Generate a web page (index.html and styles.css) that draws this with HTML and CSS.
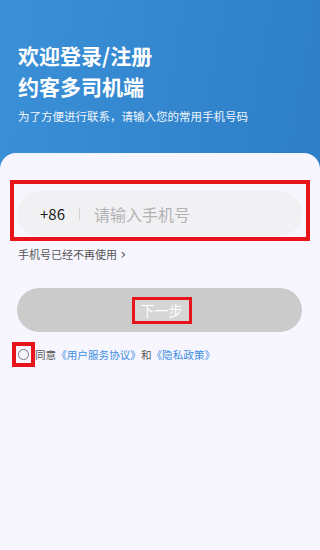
FILE: index.html
```html
<!DOCTYPE html>
<html lang="zh-CN">

<head>
  <meta charset="UTF-8">
  <title>登录</title>
  <link rel="stylesheet" href="styles.css">
</head>

<body>
  <div class="page">
    <div class="header">
      <h1 class="title">欢迎登录/注册<br>约客多司机端</h1>
      <p class="subtitle">为了方便进行联系，请输入您的常用手机号码</p>
    </div>

    <div class="card">
      <div class="phone-box">
        <div class="phone">
          <span class="code">+86</span>
          <span class="divider"></span>
          <input type="tel" class="phone-input" placeholder="请输入手机号">
        </div>
      </div>

      <a href="#" class="old-phone">手机号已经不再使用 <span class="arrow">&rsaquo;</span></a>

      <button class="next"><span class="next-text">下一步</span></button>

      <div class="agree">
        <span class="check-box"><span class="circle"></span></span>
        <span class="agree-text">同意<a href="#" class="link">《用户服务协议》</a>和<a href="#" class="link">《隐私政策》</a></span>
      </div>
    </div>
  </div>
</body>

</html>
```

FILE: styles.css
```css
html,
body {
  height: 100%;
}

body {
  margin: 0;
  font-family: "Noto Sans CJK SC", "Noto Sans", sans-serif;
  background: #f7f6fe;
}

.page {
  height: 100%;
  display: flex;
  flex-direction: column;
  background: linear-gradient(100deg, #3b90d7, #2a7bc4);
}

.header {
  height: 153px;
  padding: 40px 0 0 18px;
  box-sizing: border-box;
  color: #FFF;
}

.title {
  margin: 0;
  font-size: 21px;
  line-height: 31px;
  font-weight: bold;
}

.subtitle {
  margin: 6px 0 0;
  font-size: 11.5px;
  line-height: 16px;
  color: #eef5fc;
}

.card {
  flex: 1;
  background: #f7f6fe;
  border-radius: 16px 16px 0 0;
  padding-top: 27px;
}

.phone-box {
  margin: 0 10px;
  padding: 7px 4px 1px 3px;
  border: 4px solid #e8141c;
}

.phone {
  height: 45px;
  display: flex;
  align-items: center;
  background: #f1f1f3;
  border-radius: 23px;
  padding-left: 23px;
}

.code {
  font-size: 15px;
  color: #222;
}

.divider {
  width: 1px;
  height: 12px;
  background: #d2d2d2;
  margin: 0 14px;
}

.phone-input {
  flex: 1;
  min-width: 0;
  border: none;
  background: none;
  outline: none;
  padding: 0;
  font-family: inherit;
  font-size: 16px;
}

.phone-input::placeholder {
  color: #b3b3b5;
}

.old-phone {
  display: block;
  margin: 5px 0 0 18px;
  font-size: 11px;
  line-height: 16px;
  color: #555;
  text-decoration: none;
}

.arrow {
  margin-left: 1px;
  font-family: "DejaVu Sans", sans-serif;
  font-size: 14px;
  line-height: 10px;
}

.next {
  display: flex;
  align-items: center;
  justify-content: center;
  width: 285px;
  height: 44px;
  margin: 26px 0 0 17px;
  border: none;
  border-radius: 22px;
  background: #cbcbcb;
  font-family: inherit;
  padding: 0;
}

.next-text {
  display: inline-block;
  margin-left: 4px;
  padding: 0 6px;
  border: 3px solid #e8141c;
  background: #d6d6d6;
  color: #FFF;
  font-size: 14px;
  line-height: 21px;
}

.agree {
  display: flex;
  align-items: center;
  margin: 10px 0 0 12px;
}

.check-box {
  display: flex;
  align-items: center;
  justify-content: center;
  width: 23px;
  height: 25px;
  box-sizing: border-box;
  border: 4px solid #e8141c;
}

.circle {
  width: 9px;
  height: 9px;
  border: 1.5px solid #777;
  border-radius: 50%;
}

.agree-text {
  margin-left: 0;
  font-size: 10.6px;
  color: #555;
}

.link {
  color: #3d8fe6;
  text-decoration: none;
}
```
